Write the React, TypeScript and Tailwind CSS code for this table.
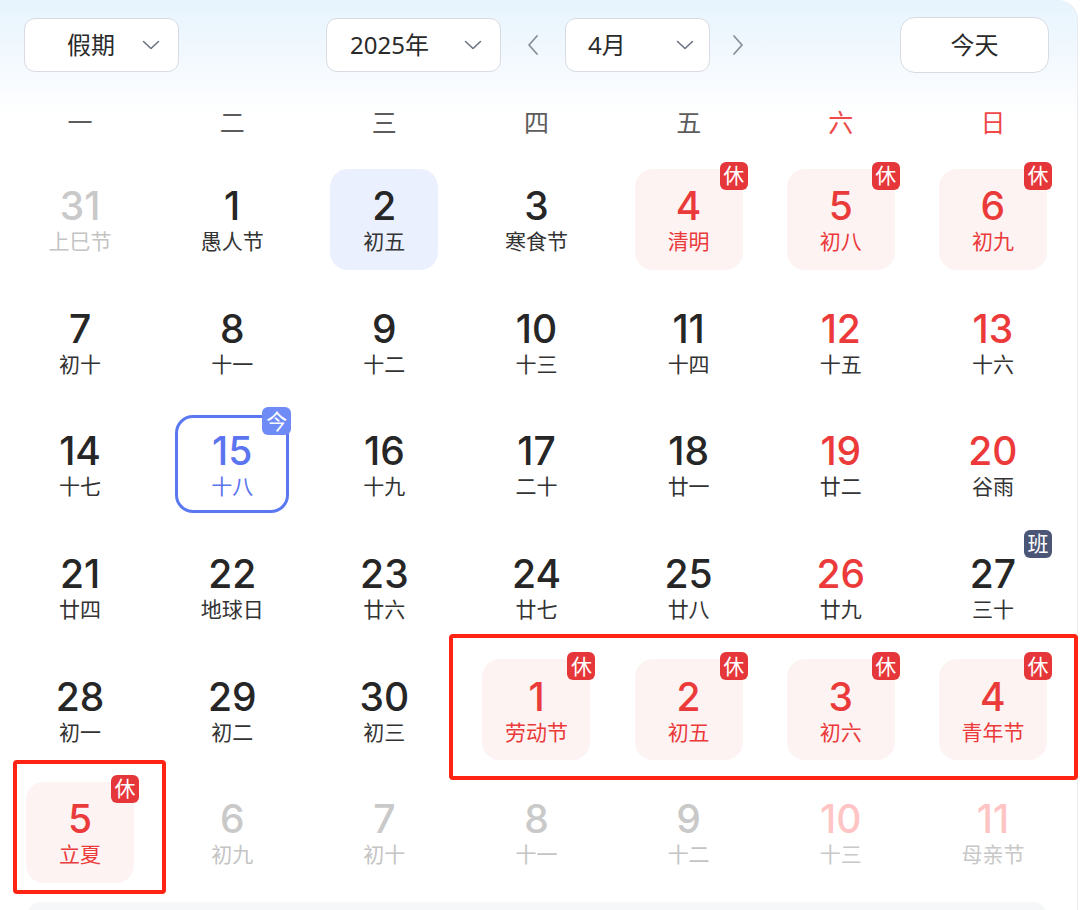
import React from "react";

type Kind = "normal" | "gray" | "pink" | "weekend" | "holiday" | "selected" | "today";
type Cell = { d: number; l: string; k?: Kind; b?: "休" | "班" };

const rows: Cell[][] = [
  [
    { d: 31, l: "上巳节", k: "gray" },
    { d: 1, l: "愚人节" },
    { d: 2, l: "初五", k: "selected" },
    { d: 3, l: "寒食节" },
    { d: 4, l: "清明", k: "holiday", b: "休" },
    { d: 5, l: "初八", k: "holiday", b: "休" },
    { d: 6, l: "初九", k: "holiday", b: "休" },
  ],
  [
    { d: 7, l: "初十" },
    { d: 8, l: "十一" },
    { d: 9, l: "十二" },
    { d: 10, l: "十三" },
    { d: 11, l: "十四" },
    { d: 12, l: "十五", k: "weekend" },
    { d: 13, l: "十六", k: "weekend" },
  ],
  [
    { d: 14, l: "十七" },
    { d: 15, l: "十八", k: "today" },
    { d: 16, l: "十九" },
    { d: 17, l: "二十" },
    { d: 18, l: "廿一" },
    { d: 19, l: "廿二", k: "weekend" },
    { d: 20, l: "谷雨", k: "weekend" },
  ],
  [
    { d: 21, l: "廿四" },
    { d: 22, l: "地球日" },
    { d: 23, l: "廿六" },
    { d: 24, l: "廿七" },
    { d: 25, l: "廿八" },
    { d: 26, l: "廿九", k: "weekend" },
    { d: 27, l: "三十", b: "班" },
  ],
  [
    { d: 28, l: "初一" },
    { d: 29, l: "初二" },
    { d: 30, l: "初三" },
    { d: 1, l: "劳动节", k: "holiday", b: "休" },
    { d: 2, l: "初五", k: "holiday", b: "休" },
    { d: 3, l: "初六", k: "holiday", b: "休" },
    { d: 4, l: "青年节", k: "holiday", b: "休" },
  ],
  [
    { d: 5, l: "立夏", k: "holiday", b: "休" },
    { d: 6, l: "初九", k: "gray" },
    { d: 7, l: "初十", k: "gray" },
    { d: 8, l: "十一", k: "gray" },
    { d: 9, l: "十二", k: "gray" },
    { d: 10, l: "十三", k: "pink" },
    { d: 11, l: "母亲节", k: "pink" },
  ],
];

const weekdays = ["一", "二", "三", "四", "五", "六", "日"];

function ChevronDown() {
  return (
    <svg width="18" height="10" viewBox="0 0 18 10" fill="none">
      <path d="M1.5 1.5 L9 8.5 L16.5 1.5" stroke="#6b7280" strokeWidth="1.6" strokeLinecap="round" strokeLinejoin="round" />
    </svg>
  );
}

function Arrow({ dir }: { dir: "l" | "r" }) {
  return (
    <svg width="12" height="22" viewBox="0 0 12 22" fill="none">
      <path
        d={dir === "l" ? "M10 2 L2 11 L10 20" : "M2 2 L10 11 L2 20"}
        stroke="#8a8f99"
        strokeWidth="1.8"
        strokeLinecap="round"
        strokeLinejoin="round"
      />
    </svg>
  );
}

function DayCell({ c }: { c: Cell }) {
  const k = c.k ?? "normal";
  let box = "w-[108px] h-[101px] rounded-[18px]";
  let num = "text-[#262626]";
  let lun = "text-[#333333]";
  if (k === "gray") {
    num = "text-[#c9c9c9]";
    lun = "text-[#c4c4c4]";
  } else if (k === "pink") {
    num = "text-[#ffc5c5]";
    lun = "text-[#c8c8c8]";
  } else if (k === "weekend") {
    num = "text-[#ec3a3a]";
  } else if (k === "holiday") {
    box += " bg-[#fdf3f3]";
    num = "text-[#ea3a3a]";
    lun = "text-[#ea3a3a]";
  } else if (k === "selected") {
    box += " bg-[#ebf0fe]";
  } else if (k === "today") {
    box = "w-[114px] h-[98px] rounded-[18px] border-[3px] border-[#5b78f0]";
    num = "text-[#5b74ef]";
    lun = "text-[#5b74ef]";
  }
  return (
    <div className="flex items-center justify-center">
      <div className={`relative flex flex-col items-center justify-center ${box}`}>
        <span className={`font-['Inter','Roboto',sans-serif] text-[39px] leading-[44px] font-medium ${num}`}>{c.d}</span>
        <span className={`text-[21px] leading-[26px] ${lun}`}>{c.l}</span>
        {c.b && (
          <span
            className={`absolute -top-[7px] -right-[5px] flex h-[28px] w-[28px] items-center justify-center rounded-[6px] text-[21px] leading-none text-white ${
              c.b === "休" ? "bg-[#e5363a]" : "bg-[#4b5576]"
            }`}
          >
            {c.b}
          </span>
        )}
        {k === "today" && (
          <span className="absolute -top-[11px] -right-[5px] flex h-[28px] w-[29px] items-center justify-center rounded-[6px] bg-[#6f8cf6] text-[21px] leading-none text-white">
            今
          </span>
        )}
      </div>
    </div>
  );
}

export default function App() {
  return (
    <div
      className="relative h-[910px] w-[1080px] overflow-hidden bg-white"
      style={{ fontFamily: "'Noto Sans', 'Noto Sans CJK SC', sans-serif" }}
    >
      <div className="h-full w-[1078px] rounded-tr-[20px] border-r border-[#e9ebee] bg-[linear-gradient(180deg,#e7f4fd_0px,#f3f9fe_60px,#ffffff_115px)]">
        {/* Header */}
        <div className="flex items-center pl-[24px] pt-[17px]">
          <div className="flex h-[54px] w-[155px] items-center justify-between rounded-[11px] border border-[#d8dbe1] bg-white pl-[42px] pr-[18px]">
            <span className="text-[24px] text-[#2a2a2a]">假期</span>
            <ChevronDown />
          </div>
          <div className="ml-[147px] flex h-[54px] w-[175px] items-center justify-between rounded-[11px] border border-[#d8dbe1] bg-white pl-[23px] pr-[18px]">
            <span className="text-[24px] text-[#2a2a2a]">2025年</span>
            <ChevronDown />
          </div>
          <div className="flex w-[64px] items-center justify-center">
            <Arrow dir="l" />
          </div>
          <div className="flex h-[54px] w-[145px] items-center justify-between rounded-[11px] border border-[#d8dbe1] bg-white pl-[22px] pr-[15px]">
            <span className="text-[24px] text-[#2a2a2a]">4月</span>
            <ChevronDown />
          </div>
          <div className="flex w-[56px] items-center justify-center">
            <Arrow dir="r" />
          </div>
          <div className="ml-[134px] flex h-[56px] w-[149px] items-center justify-center rounded-[15px] border border-[#d8dbe1] bg-white">
            <span className="text-[24px] text-[#2a2a2a]">今天</span>
          </div>
        </div>

        {/* Weekdays */}
        <div className="ml-[4px] mt-[17px] grid h-[66px] w-[1065px] grid-cols-7 items-center">
          {weekdays.map((w, i) => (
            <div key={w} className={`text-center text-[25px] ${i >= 5 ? "text-[#f04848]" : "text-[#5c5c5c]"}`}>
              {w}
            </div>
          ))}
        </div>

        {/* Days */}
        <div className="ml-[4px] mt-[2px] grid w-[1065px] auto-rows-[122.6px] grid-cols-7">
          {rows.flat().map((c, i) => (
            <DayCell key={i} c={c} />
          ))}
        </div>

        {/* Bottom panel peek */}
        <div className="ml-[27px] mt-[8px] h-[30px] w-[1020px] rounded-t-[14px] bg-[#f6f7f9]" />
      </div>

      {/* Annotation rectangles */}
      <div className="pointer-events-none absolute left-[449px] top-[634px] h-[146px] w-[629px] rounded-[4px] border-[4px] border-[#ff2313]" />
      <div className="pointer-events-none absolute left-[13px] top-[760px] h-[134px] w-[153px] rounded-[4px] border-[4px] border-[#ff2313]" />
    </div>
  );
}
